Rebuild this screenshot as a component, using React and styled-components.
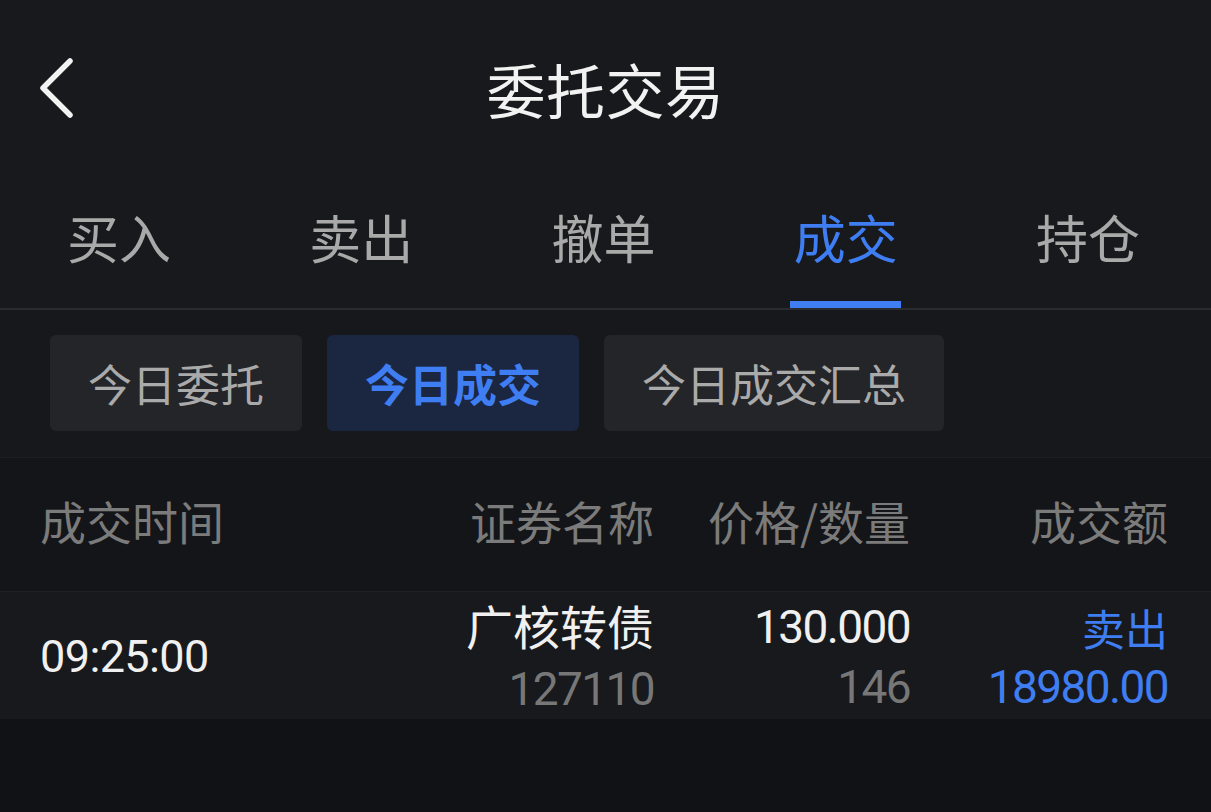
import React from 'react'
import styled, { createGlobalStyle } from 'styled-components'

const GlobalStyle = createGlobalStyle`
  html, body {
    margin: 0;
    padding: 0;
    background: #111215;
  }
  body {
    font-family: 'Noto Sans CJK SC', 'Noto Sans', sans-serif;
  }
`

const BLUE = '#3f7ef2'

const Page = styled.div`
  width: 1211px;
  height: 812px;
  background: #111215;
  overflow: hidden;
`

const Header = styled.header`
  position: relative;
  height: 176px;
  background: #18191c;
  display: flex;
  align-items: center;
  justify-content: center;

  .back {
    position: absolute;
    left: 36px;
    top: 54px;
  }
`

const Title = styled.h1`
  margin: 0;
  color: #f2f2f2;
  font-size: 59px;
  font-weight: 400;
  line-height: 1;
  letter-spacing: 0.5px;
`

const Tabs = styled.nav`
  display: grid;
  grid-template-columns: repeat(5, 1fr);
  height: 132px;
  background: #18191c;
  border-bottom: 2px solid #2a2b2e;
`

const Tab = styled.div`
  position: relative;
  display: flex;
  justify-content: center;
  padding-top: 31px;
  padding-right: 4px;
  font-size: 52px;
  line-height: 60px;
  color: ${p => (p.$active ? BLUE : '#a9a9a9')};

  &::after {
    content: '';
    display: ${p => (p.$active ? 'block' : 'none')};
    position: absolute;
    bottom: 0;
    left: 50%;
    width: 111px;
    height: 7px;
    margin-left: -58px;
    background: ${BLUE};
  }
`

const SubBar = styled.div`
  display: flex;
  gap: 25px;
  padding: 25px 50px 26px;
  background: #17181b;
  border-bottom: 1px solid #1d1e21;
`

const SubTab = styled.div`
  height: 96px;
  padding: 0 38px;
  display: flex;
  align-items: center;
  justify-content: center;
  border-radius: 6px;
  font-size: 44px;
  font-weight: ${p => (p.$active ? 700 : 400)};
  color: ${p => (p.$active ? BLUE : '#aaaaaa')};
  background: ${p => (p.$active ? '#1b2640' : '#242529')};
`

const Row = styled.div`
  display: grid;
  grid-template-columns: 1fr 230px 256px 258px;
  padding: 0 43px 0 40px;
  align-items: center;
`

const HeadRow = styled(Row)`
  height: 134px;
  padding-bottom: 10px;
  box-sizing: border-box;
  background: #141518;
  border-bottom: 1px solid #1f2023;
  color: #7b7b7b;
  font-size: 46px;
`

const DataRow = styled(Row)`
  height: 127px;
  padding-top: 3px;
  box-sizing: border-box;
  background: #18191c;
`

const Cell = styled.div`
  display: flex;
  flex-direction: column;
  align-items: ${p => (p.$left ? 'flex-start' : 'flex-end')};
  justify-content: center;
  gap: ${p => p.$gap || 0}px;
  white-space: nowrap;
`

const Line = styled.span`
  display: block;
  line-height: ${p => p.$lh || 58}px;
  font-size: ${p => p.$size || 46}px;
  color: ${p => p.$color || '#f0f0f0'};
  font-family: ${p => (p.$num ? "Roboto, 'Noto Sans', sans-serif" : "'Noto Sans CJK SC', sans-serif")};
  letter-spacing: ${p => (p.$num ? '-1.6px' : '0')};
`

function BackIcon() {
  return (
    <svg className="back" width="44" height="68" viewBox="0 0 44 68" fill="none">
      <path d="M34 7 L7 34 L34 61" stroke="#f2f2f2" strokeWidth="5.5" strokeLinecap="round" strokeLinejoin="round" />
    </svg>
  )
}

const tabs = ['买入', '卖出', '撤单', '成交', '持仓']
const subTabs = ['今日委托', '今日成交', '今日成交汇总']

export default function App() {
  return (
    <Page>
      <GlobalStyle />
      <Header>
        <BackIcon />
        <Title>委托交易</Title>
      </Header>
      <Tabs>
        {tabs.map(t => (
          <Tab key={t} $active={t === '成交'}>{t}</Tab>
        ))}
      </Tabs>
      <SubBar>
        {subTabs.map(t => (
          <SubTab key={t} $active={t === '今日成交'}>{t}</SubTab>
        ))}
      </SubBar>
      <HeadRow>
        <Cell $left>成交时间</Cell>
        <Cell>证券名称</Cell>
        <Cell>价格/数量</Cell>
        <Cell>成交额</Cell>
      </HeadRow>
      <DataRow>
        <Cell $left>
          <Line $num $size={45} style={{ letterSpacing: '-0.6px' }}>09:25:00</Line>
        </Cell>
        <Cell $gap={6}>
          <Line $size={47}>广核转债</Line>
          <Line $num $color="#777777">127110</Line>
        </Cell>
        <Cell $gap={2}>
          <Line $num>130.000</Line>
          <Line $num $color="#777777">146</Line>
        </Cell>
        <Cell $gap={2}>
          <Line $size={43} $color={BLUE}>卖出</Line>
          <Line $num $color={BLUE}>18980.00</Line>
        </Cell>
      </DataRow>
    </Page>
  )
}
